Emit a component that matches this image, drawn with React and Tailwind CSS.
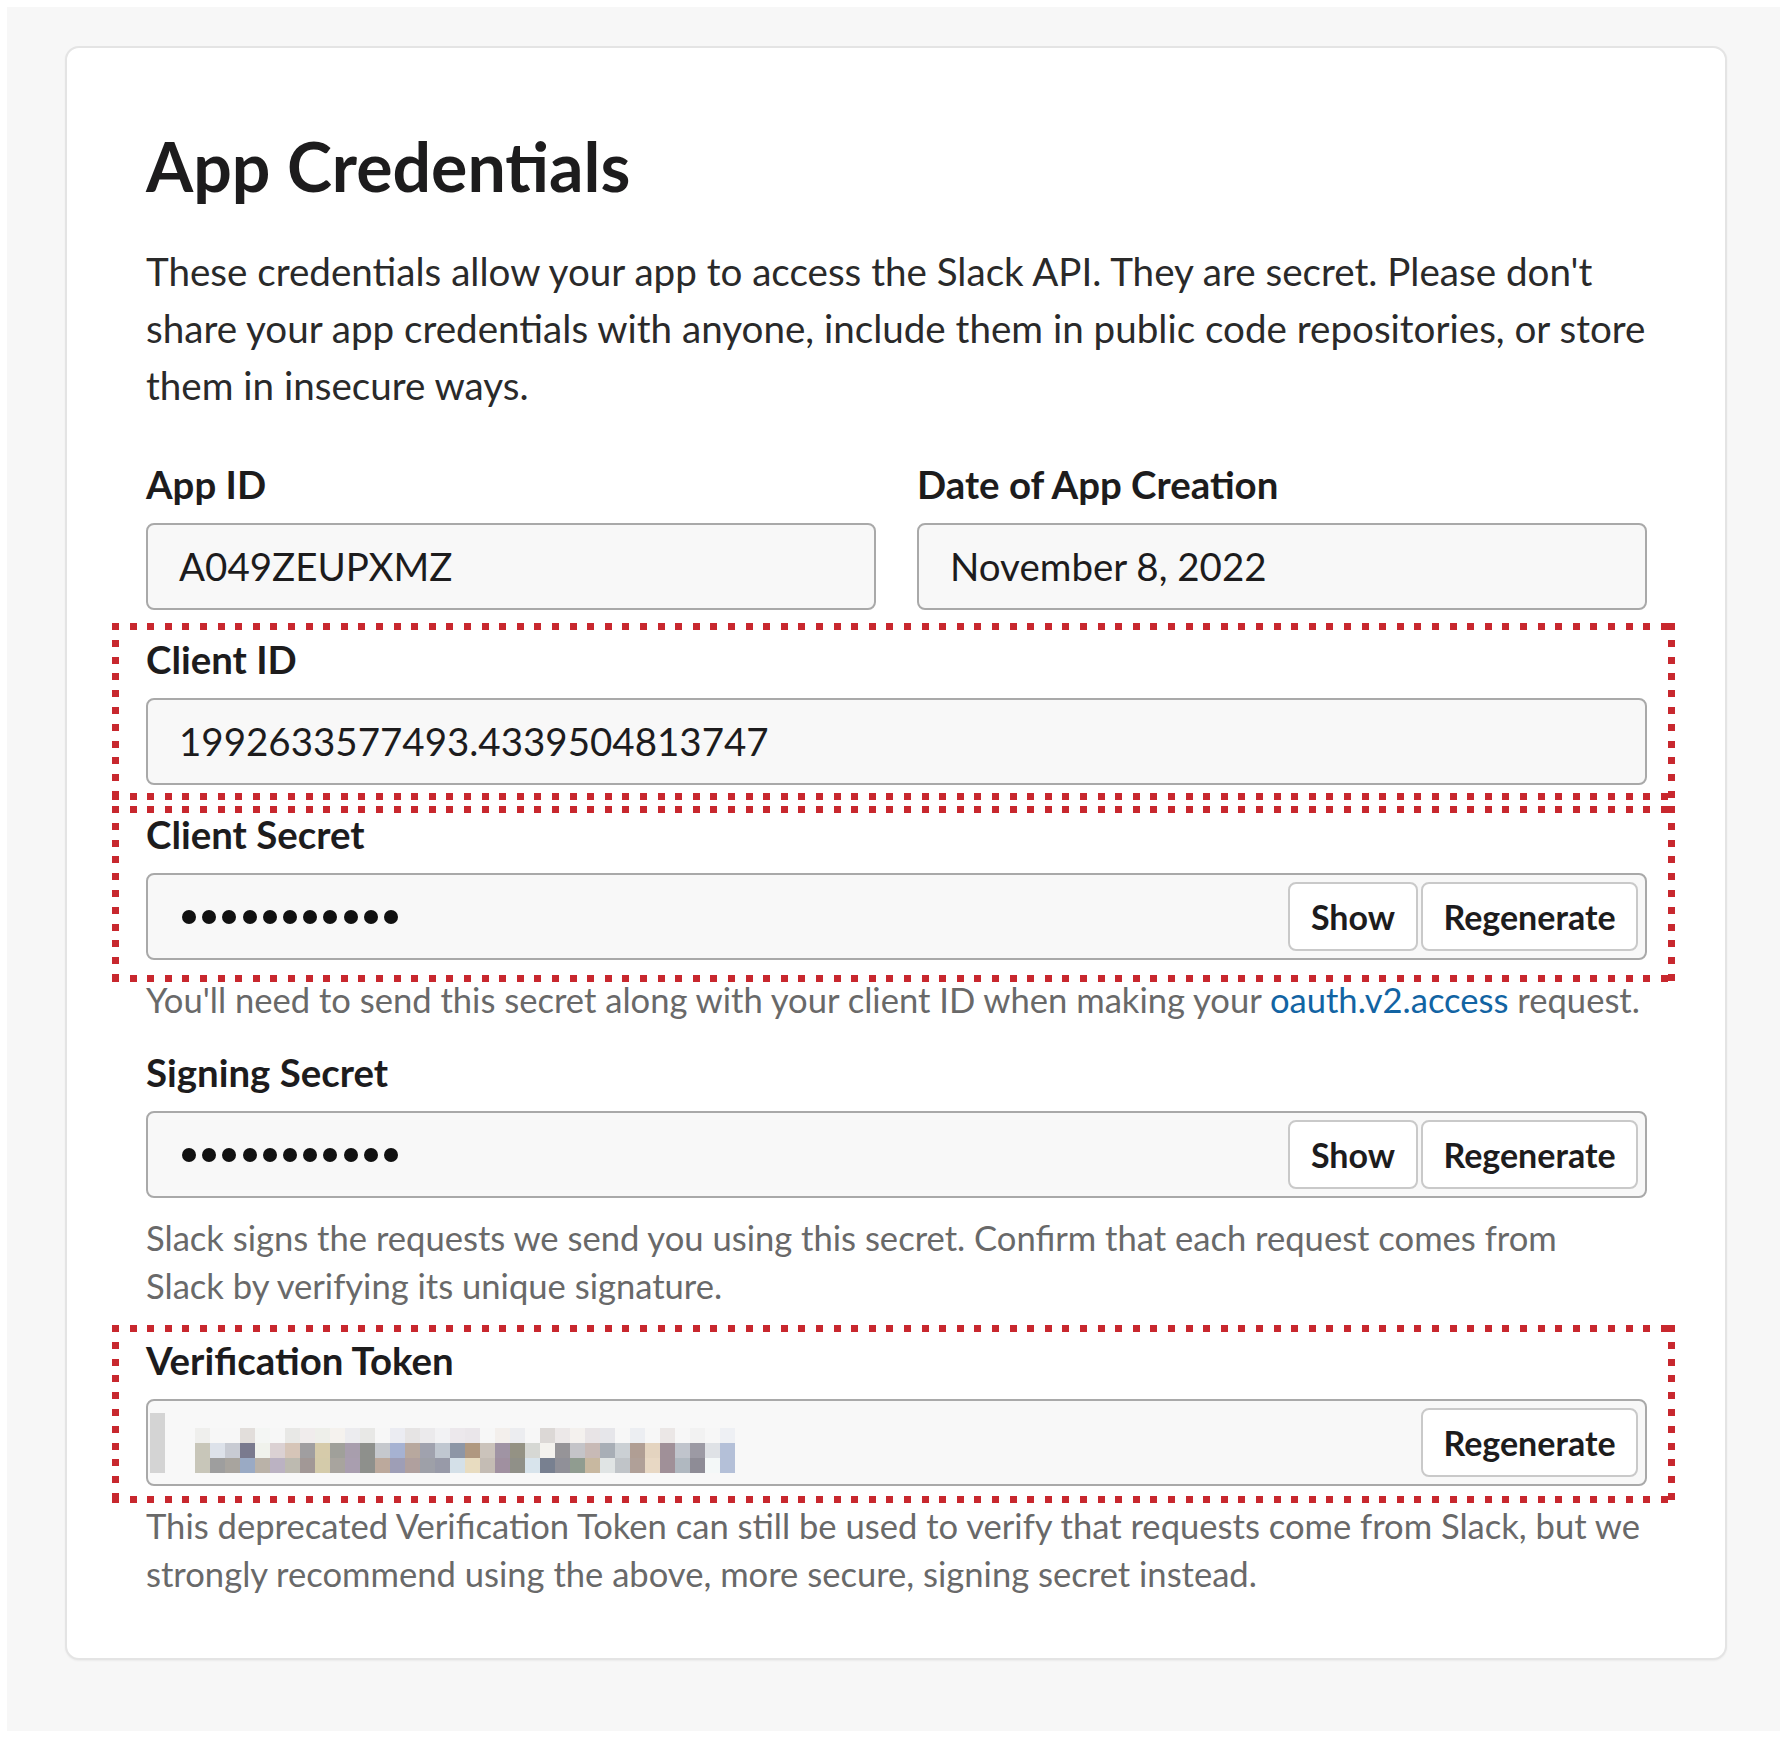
const row1 = ['#efefed','#f7f7f7','#f7f7f7','#e2dedb','#f4f6f4','#f7f7f7','#e8e8e6','#f0ecec','#eeefea','#f5f2ee','#ececef','#e8e8e6','#f7f7f7','#ebecf2','#e6e4e4','#ebeaec','#f2f2f4','#ece8ec','#eae6ea','#f7f7f7','#f3efec','#ecedf0','#f7f7f7','#dcd8d6','#ece8e8','#f4f1ee','#e8e4e6','#e6e6ea','#f7f7f7','#eceef2','#f7f7f7','#ebe7e6','#f7f7f7','#f2f2f2','#f7f7f7','#eef0f4']
const row2 = ['#c8c6b9','#dde2ea','#c8cbd3','#7a7a8e','#f0f2ec','#dbd1d3','#d6c5b8','#a09ea0','#d6cbaa','#a0a09a','#a89ead','#8e908c','#c5c8cd','#a6b2d2','#b8a89e','#a0a2ae','#c0c7d0','#8d96a6','#b09880','#cbc3bb','#a094a4','#949284','#d6d8d4','#f4f2ee','#969498','#c4c4c8','#c8bab6','#a8aeb6','#cbd0d4','#b09e94','#e4d4c0','#a09098','#c0c4cc','#9c9aa4','#dfe2e6','#b4c0d8']
const row3 = ['#c8c6b9','#9e9e9e','#a8a49e','#9aaac4','#bab2a8','#bbb2c2','#bdbab0','#a29896','#d4cbaa','#a8a49e','#a99eaf','#8e908c','#bca99c','#9e9eb6','#b0a09e','#9ea0a8','#989aa8','#d4e0e8','#e8dcc0','#c4bcb4','#a090a0','#909088','#d8e4ec','#788090','#909098','#909c90','#c8b8a0','#e0e4e4','#c0c4c8','#b0a098','#e8d8c4','#a09098','#b0b8c0','#8e8c96','#f4f8f8','#b4c0d8']

function Mosaic() {
  return (
    <svg width="590" height="60" viewBox="0 0 590 60" className="block shrink-0">
      <rect x="0" y="0" width="15" height="60" fill="#d4d4d4" />
      {[row1, row2, row3].map((row, r) =>
        row.map((c, i) => (
          <rect key={r + '-' + i} x={45 + i * 15} y={15 + r * 15} width="15" height="15" fill={c} />
        ))
      )}
    </svg>
  )
}

function Dots() {
  return (
    <div className="flex gap-[6.2px] ml-[3px]">
      {Array.from({ length: 11 }).map((_, i) => (
        <span key={i} className="block w-[14px] h-[14px] rounded-full bg-[#111]" />
      ))}
    </div>
  )
}

function Btn({ children, w }) {
  return (
    <button className={`${w} h-[69px] shrink-0 rounded-[8px] border-2 border-[#c9c9c9] bg-white text-[34px] font-bold text-[#1d1c1d] leading-none`}>
      {children}
    </button>
  )
}

function Label({ children }) {
  return <div className="text-[38.4px] font-bold leading-[42px] text-[#1d1c1d] mb-[18px]">{children}</div>
}

function Box({ children, right }) {
  return (
    <div className="flex items-center h-[87px] rounded-[8px] border-2 border-[#a9a9a9] bg-[#f8f8f8] pl-[31px] pr-[7px]">
      <div className="flex-1 text-[38.5px] text-[#1d1c1d] leading-none">{children}</div>
      {right}
    </div>
  )
}

function Help({ children }) {
  return <p className="mt-[16px] text-[34.6px] leading-[48px] text-[#696969]">{children}</p>
}

// red dotted annotation frame laid over a field
function Marked({ children, edges }) {
  const h = 'bg-[repeating-linear-gradient(90deg,#c8282e_0_7px,transparent_7px_17.6px)]'
  const v = 'bg-[repeating-linear-gradient(180deg,#c8282e_0_7px,transparent_7px_16.8px)]'
  return (
    <div className="relative">
      {children}
      <div className={`pointer-events-none absolute -left-[34px] -right-[28px] ${edges}`}>
        <div className={`absolute top-0 left-0 right-0 h-[7px] ${h}`} />
        <div className={`absolute bottom-0 left-0 right-0 h-[7px] ${h}`} />
        <div className={`absolute top-0 bottom-0 left-0 w-[7px] ${v}`} />
        <div className={`absolute top-0 bottom-0 right-0 w-[7px] ${v}`} />
      </div>
    </div>
  )
}

export default function App() {
  return (
    <div className="bg-white pt-[7px] pl-[7px] pr-[5px] pb-[9px] font-['Lato','Noto_Sans',sans-serif]">
      <div className="bg-[#f7f7f7] pt-[39px] pl-[58px] pr-[53px] pb-[71px]">
        <div className="bg-white border-2 border-[#e4e4e4] rounded-[14px] shadow-[0_1px_2px_rgba(0,0,0,0.05)] pt-[77px] pl-[79px] pr-[78px] pb-[60px]">
          <h1 className="text-[68px] font-bold leading-[82px] text-[#1d1c1d]">App Credentials</h1>
          <p className="mt-[36px] text-[38.6px] leading-[57px] text-[#2a2a2a]">
            These credentials allow your app to access the Slack API. They are secret. Please don't share your app credentials with anyone, include them in public code repositories, or store them in insecure ways.
          </p>

          <div className="mt-[49px] grid grid-cols-2 gap-[41px]">
            <div>
              <Label>App ID</Label>
              <Box>A049ZEUPXMZ</Box>
            </div>
            <div>
              <Label>Date of App Creation</Label>
              <Box>November 8, 2022</Box>
            </div>
          </div>

          <div className="mt-[28px]">
            <Marked edges="-top-[15px] -bottom-[15px]">
              <Label>Client ID</Label>
              <Box>1992633577493.4339504813747</Box>
            </Marked>
          </div>

          <div className="mt-[28px]">
            <Marked edges="-top-[7px] -bottom-[22px]">
              <Label>Client Secret</Label>
              <Box right={<div className="flex gap-[3px]"><Btn w="w-[130px]">Show</Btn><Btn w="w-[217px]">Regenerate</Btn></div>}>
                <Dots />
              </Box>
            </Marked>
            <Help>
              You'll need to send this secret along with your client ID when making your <a className="text-[#1264a3]">oauth.v2.access</a> request.
            </Help>
          </div>

          <div className="mt-[27px]">
            <Label>Signing Secret</Label>
            <Box right={<div className="flex gap-[3px]"><Btn w="w-[130px]">Show</Btn><Btn w="w-[217px]">Regenerate</Btn></div>}>
              <Dots />
            </Box>
            <Help>
              Slack signs the requests we send you using this secret. Confirm that each request comes from<br />
              Slack by verifying its unique signature.
            </Help>
          </div>

          <div className="mt-[29px]">
            <Marked edges="-top-[14px] -bottom-[17px]">
              <Label>Verification Token</Label>
              <div className="flex items-center h-[87px] rounded-[8px] border-2 border-[#a9a9a9] bg-[#f8f8f8] pl-[2px] pr-[7px]">
                <div className="flex-1 flex"><Mosaic /></div>
                <Btn w="w-[217px]">Regenerate</Btn>
              </div>
            </Marked>
            <Help>
              This deprecated Verification Token can still be used to verify that requests come from Slack, but we strongly recommend using the above, more secure, signing secret instead.
            </Help>
          </div>
        </div>
      </div>
    </div>
  )
}
